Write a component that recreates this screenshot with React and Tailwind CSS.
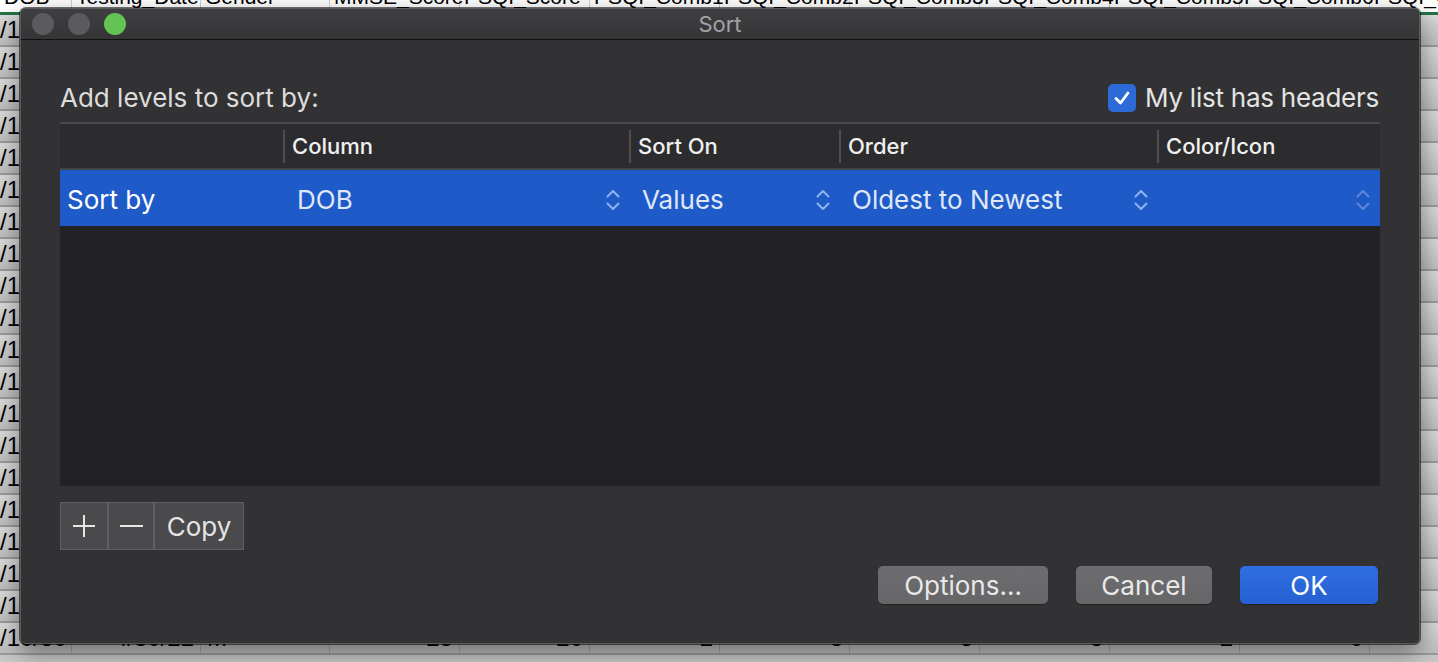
import React from "react";

// spreadsheet column widths behind the dialog
const colWidths = [72, 129, 129, 130, 130, 130, 130, 130, 130, 130, 130, 130];
const headerCells = ["DOB", "Testing_Date", "Gender", "MMSE_Score", "PSQI_Score", "PSQI_Comb1", "PSQI_Comb2", "PSQI_Comb3", "PSQI_Comb4", "PSQI_Comb5", "PSQI_Comb6", "PSQI_C"];
const lastRow = ["/10/30", "4/30/22", "M", "25", "20", "2", "3", "3", "3", "2", "0", "1"];

function Chevrons({ faint }) {
  return (
    <svg width="14" height="22" viewBox="0 0 14 22" fill="none" stroke={faint ? "#5d86d8" : "#92b2ec"} strokeWidth="2" strokeLinecap="round" strokeLinejoin="round">
      <polyline points="1.5,7.5 7,2 12.5,7.5" />
      <polyline points="1.5,14.5 7,20 12.5,14.5" />
    </svg>
  );
}

function Sheet() {
  return (
    <div className="flex flex-col font-['Liberation_Sans',Arial,sans-serif] text-black">
      {/* header row, mostly hidden under the dialog */}
      <div className="flex h-[12px] overflow-hidden bg-white">
        {colWidths.map((w, i) => (
          <div key={i} style={{ width: w }} className="shrink-0 whitespace-nowrap border-r border-[#d0d0d0] pl-[4px] text-[21px] leading-[26px]">
            <div className="-mt-[16px]">{headerCells[i]}</div>
          </div>
        ))}
      </div>
      <div className="h-[3px] bg-[#217346]" />
      {Array.from({ length: 20 }).map((_, r) => (
        <div key={r} className="flex h-[32px] border-b-2 border-[#9a9a9a]">
          {colWidths.map((w, i) => {
            const last = r === 19;
            const text = i === 0 ? (last ? lastRow[0] : "/16/54") : last ? lastRow[i] : "";
            const right = i === 1 || i >= 3;
            return (
              <div
                key={i}
                style={{ width: w }}
                className={`shrink-0 overflow-hidden whitespace-nowrap border-r border-[#a4a4a4] bg-linear-to-b from-[#d9d9d9] to-[#bdbdbd] px-[6px] text-[24px] leading-[30px] ${right ? "text-right" : "text-left"} ${i === 0 ? "pl-0" : ""}`}
              >
                {text}
              </div>
            );
          })}
        </div>
      ))}
    </div>
  );
}

export default function App() {
  return (
    <div className="relative h-[662px] w-[1438px] overflow-hidden bg-[#c8c8c8]">
      <Sheet />

      {/* Sort dialog */}
      <div className="absolute left-[20px] top-[8px] flex h-[636px] w-[1400px] flex-col overflow-hidden rounded-[6px] border border-[#5a5a5c] bg-[#323234] font-['Inter','Liberation_Sans',sans-serif] shadow-[0_0_0_1px_rgba(0,0,0,0.55),0_8px_24px_rgba(0,0,0,0.45)]">
        {/* title bar */}
        <div className="grid h-[31px] grid-cols-[1fr_auto_1fr] items-center border-b border-[#111112] bg-linear-to-b from-[#3f3f41] to-[#353537]">
          <div className="flex items-center gap-[14px] pl-[11px]">
            <span className="h-[22px] w-[22px] rounded-full bg-[#5b5b5d]" />
            <span className="h-[22px] w-[22px] rounded-full bg-[#5b5b5d]" />
            <span className="h-[22px] w-[22px] rounded-full bg-[#63c455]" />
          </div>
          <div className="text-[22px] leading-[30px] text-[#a2a2a4]">Sort</div>
          <div />
        </div>

        {/* body */}
        <div className="flex flex-1 flex-col px-[39px]">
          <div className="flex items-center justify-between pb-[6px] pt-[40px]">
            <div className="text-[26px] leading-[36px] text-[#dcdcdc]">Add levels to sort by:</div>
            <label className="flex items-center gap-[9px]">
              <span className="flex h-[28px] w-[28px] items-center justify-center rounded-[5px] bg-[#2d6ad8]">
                <svg width="20" height="20" viewBox="0 0 20 20" fill="none" stroke="white" strokeWidth="2.8" strokeLinecap="round" strokeLinejoin="round">
                  <polyline points="4,10.5 8.5,15 16,5" />
                </svg>
              </span>
              <span className="mr-[1px] text-[26px] leading-[36px] tracking-[-0.25px] text-[#e4e4e4]">My list has headers</span>
            </label>
          </div>

          {/* levels table */}
          <div className="flex h-[364px] flex-col border-t-2 border-[#4a4a4c] bg-[#222224]">
            <div className="grid h-[46px] grid-cols-[223px_346px_210px_318px_223px] items-center border-b-2 border-[#444446] bg-[#2c2c2e] text-[22px] font-medium text-[#f0f0f0]">
              <div />
              {["Column", "Sort On", "Order", "Color/Icon"].map((h) => (
                <div key={h} className="flex items-center">
                  <span className="h-[33px] w-[2px] bg-[#4e4e50]" />
                  <span className="ml-[7px]">{h}</span>
                </div>
              ))}
            </div>
            <div className="grid h-[56px] grid-cols-[223px_346px_210px_318px_223px] items-center bg-[#1f5bc8] pt-[3px] text-[26px]">
              <div className="pl-[7px] text-white">Sort by</div>
              <div className="flex items-center justify-between pl-[14px] pr-[9px] text-[#dfe7f7]">
                <span>DOB</span>
                <Chevrons />
              </div>
              <div className="flex items-center justify-between pl-[13px] pr-[9px] text-[#dfe7f7]">
                <span>Values</span>
                <Chevrons />
              </div>
              <div className="flex items-center justify-between pl-[13px] pr-[9px] text-[#dfe7f7]">
                <span>Oldest to Newest</span>
                <Chevrons />
              </div>
              <div className="flex items-center justify-end pr-[10px]">
                <Chevrons faint />
              </div>
            </div>
          </div>

          {/* + - Copy */}
          <div className="mt-[16px] flex h-[48px] w-[184px] border border-[#5f5f61] bg-[#4a4a4c] text-[#e4e4e4]">
            <button className="flex w-[46px] items-center justify-center">
              <svg width="22" height="22" viewBox="0 0 22 22" stroke="#e6e6e6" strokeWidth="2">
                <line x1="11" y1="0" x2="11" y2="22" />
                <line x1="0" y1="11" x2="22" y2="11" />
              </svg>
            </button>
            <button className="flex w-[46px] items-center justify-center border-l-2 border-[#5f5f61]">
              <svg width="23" height="22" viewBox="0 0 23 22" stroke="#e6e6e6" strokeWidth="2">
                <line x1="0" y1="11" x2="23" y2="11" />
              </svg>
            </button>
            <button className="flex flex-1 items-center justify-center border-l-2 border-[#5f5f61] text-[26px]">Copy</button>
          </div>

          {/* dialog buttons */}
          <div className="mr-[2px] mt-[16px] flex h-[38px] justify-end gap-[28px] text-[26px]">
            <button className="w-[170px] rounded-[5px] bg-linear-to-b from-[#6d6d6f] to-[#666668] text-[#e8e8e8] shadow-[0_1px_1px_rgba(0,0,0,0.3)]">Options...</button>
            <button className="w-[136px] rounded-[5px] bg-linear-to-b from-[#6d6d6f] to-[#666668] text-[#e8e8e8] shadow-[0_1px_1px_rgba(0,0,0,0.3)]">Cancel</button>
            <button className="w-[138px] rounded-[5px] bg-linear-to-b from-[#2f6ee2] to-[#2561d3] text-white shadow-[0_1px_1px_rgba(0,0,0,0.3)]">OK</button>
          </div>
        </div>
      </div>
    </div>
  );
}
